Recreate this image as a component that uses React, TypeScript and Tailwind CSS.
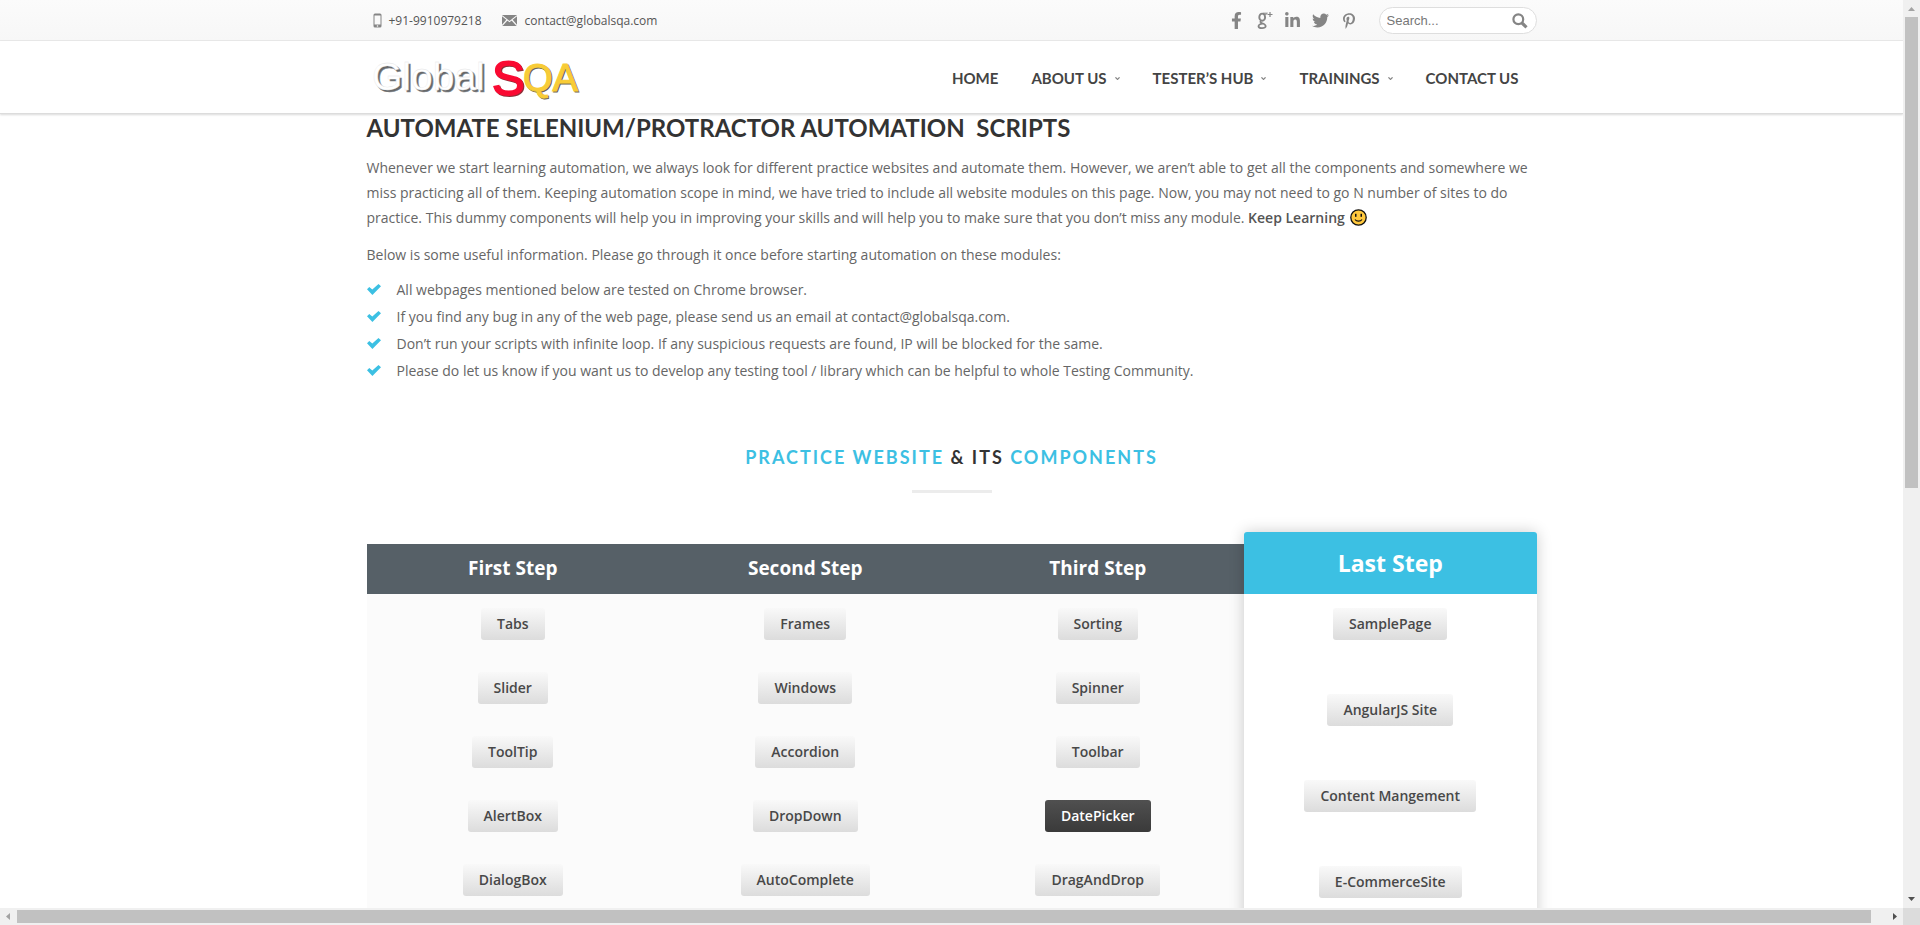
import React from 'react';
import { FaFacebookF, FaLinkedinIn, FaTwitter, FaPinterestP } from 'react-icons/fa';

const displayFont = "font-['Lato','Open_Sans',sans-serif]";

function GooglePlusIcon() {
  return (
    <svg viewBox="0 0 16 17" className="h-[17px] w-4" fill="none" stroke="currentColor">
      <ellipse cx="5.2" cy="5.2" rx="2.9" ry="3.6" strokeWidth="1.9" />
      <path d="M6 1.2h4.4L9.2 2.3H7" strokeWidth="1" />
      <path d="M4.2 8.6c-1.6 1.2-.6 2 .9 2.6 2 .8 3.9 1.500 3.600 3.200-.4 2.200-6.800 2.400-7.200.100-.2-1.500 1.500-2.600 4.200-2.800" strokeWidth="1.700" />
      <path d="M13 0v5M10.500 2.500h5" strokeWidth="1.200" />
    </svg>
  );
}

const socials = [
  { label: 'Facebook', icon: <FaFacebookF size={17} /> },
  { label: 'Google Plus', icon: <GooglePlusIcon /> },
  { label: 'LinkedIn', icon: <FaLinkedinIn size={17} /> },
  { label: 'Twitter', icon: <FaTwitter size={17} /> },
  { label: 'Pinterest', icon: <FaPinterestP size={16} /> },
];

const navItems = [
  { label: 'HOME', menu: false },
  { label: 'ABOUT US', menu: true },
  { label: 'TESTER’S HUB', menu: true },
  { label: 'TRAININGS', menu: true },
  { label: 'CONTACT US', menu: false },
];

const notes = [
  'All webpages mentioned below are tested on Chrome browser.',
  'If you find any bug in any of the web page, please send us an email at contact@globalsqa.com.',
  'Don’t run your scripts with infinite loop. If any suspicious requests are found, IP will be blocked for the same.',
  'Please do let us know if you want us to develop any testing tool / library which can be helpful to whole Testing Community.',
];

const steps = [
  { title: 'First Step', items: ['Tabs', 'Slider', 'ToolTip', 'AlertBox', 'DialogBox'] },
  { title: 'Second Step', items: ['Frames', 'Windows', 'Accordion', 'DropDown', 'AutoComplete'] },
  { title: 'Third Step', items: ['Sorting', 'Spinner', 'Toolbar', 'DatePicker', 'DragAndDrop'] },
];

const lastStep = ['SamplePage', 'AngularJS Site', 'Content Mangement', 'E-CommerceSite'];

function TopBar() {
  return (
    <div className="h-[41px] border-b border-[#e9e9e9] bg-linear-to-b from-[#fbfbfb] to-[#f7f7f7]">
      <div className="mx-auto flex h-10 max-w-[1170px] items-center justify-between pt-px">
        <div className="flex items-center pl-[6px] text-xs text-[#555]">
          <svg viewBox="0 0 9 15" className="mr-[7px] h-[15px] w-[9px]">
            <rect x="0.500" y="0.500" width="8" height="14" rx="1.500" fill="#858585" />
            <rect x="1.500" y="2.500" width="6" height="9" fill="#fafafa" />
            <circle cx="4.500" cy="13" r="0.800" fill="#fafafa" />
          </svg>
          <span>+91-9910979218</span>
          <svg viewBox="0 0 15 11" className="mr-2 ml-5 h-[11px] w-[15px]">
            <rect width="15" height="11" fill="#858585" />
            <path d="M0 .6L7.500 6.600 15 .6M0 10.600L5 5M15 10.600L10 5" fill="none" stroke="#fafafa" strokeWidth="1.200" />
          </svg>
          <a href="#contact">contact@globalsqa.com</a>
        </div>
        <div className="flex items-center">
          <div className="mr-4 flex items-center text-[#858585]">
            {socials.map((s) => (
              <a key={s.label} href="#social" aria-label={s.label} className="flex w-7 justify-center">
                {s.icon}
              </a>
            ))}
          </div>
          <form className="flex h-[27px] w-[158px] items-center rounded-full border border-[#dedede] bg-white pr-2 pl-[7px]">
            <input
              type="text"
              aria-label="Search"
              placeholder="Search..."
              className="min-w-0 flex-1 bg-transparent font-['Liberation_Sans',Arial,sans-serif] text-[13px] text-[#666] outline-none placeholder:text-[#777]"
            />
            <button type="button" aria-label="Submit search">
              <svg viewBox="0 0 16 16" className="size-4" fill="none" stroke="#858585">
                <circle cx="6.300" cy="6.300" r="4.900" strokeWidth="2.200" />
                <path d="M9.800 9.800L14.500 14.300" strokeWidth="3.200" />
              </svg>
            </button>
          </form>
        </div>
      </div>
    </div>
  );
}

function Logo() {
  return (
    <a href="#home" aria-label="GlobalSQA">
      <svg viewBox="0 0 220 50" className="h-[50px] w-[220px] overflow-visible font-['Liberation_Sans',Arial,sans-serif]">
        <g fontSize="38">
          <text x="157" y="38" fill="#6b6554" stroke="#6b6554">QA</text>
          <text x="156" y="37" fill="#f8cc36" stroke="#f8cc36">QA</text>
        </g>
        <g fontSize="39">
          <text x="7" y="38" fill="#66686a" stroke="#8a8c8e" strokeWidth="0.500">Global</text>
          <text x="5" y="36" fill="#ffffff" stroke="#e4e5e6" strokeWidth="0.300">Global</text>
        </g>
        <g fontSize="49">
          <text x="126" y="42" fill="#8d3038" stroke="#8d3038" strokeWidth="1.800">S</text>
          <text x="125" y="41" fill="#fa0a32" stroke="#fa0a32" strokeWidth="1.800">S</text>
        </g>
      </svg>
    </a>
  );
}

function Header() {
  return (
    <header className="relative z-10 border-b border-[#dcdcdc] bg-white shadow-[0_1px_2px_rgba(0,0,0,0.15)]">
      <div className="mx-auto flex h-[72px] max-w-[1170px] items-center justify-between pt-[3px]">
        <Logo />
        <nav className={`${displayFont} flex items-center gap-[33px] pr-[18px] text-[15px] font-bold text-[#444]`}>
          {navItems.map((n) => (
            <a key={n.label} href="#nav" className="flex items-center gap-2 whitespace-nowrap">
              {n.label}
              {n.menu && (
                <svg viewBox="0 0 5 3" className="h-[3px] w-[5px]">
                  <path d="M0 .5L2.500 3 5 .5H3.800L2.500 1.700 1.200 .5z" fill="#777" stroke="#777" strokeWidth="0.300" />
                </svg>
              )}
            </a>
          ))}
        </nav>
      </div>
    </header>
  );
}

function Smiley() {
  return (
    <svg viewBox="0 0 17 17" role="img" aria-label="smile" className="ml-[2px] inline-block size-[17px] align-[-3px]">
      <circle cx="8.500" cy="8.500" r="7.700" fill="#ffc83d" stroke="#111" strokeWidth="1.300" />
      <rect x="5" y="4.800" width="1.500" height="3" fill="#111" />
      <rect x="10.500" y="4.800" width="1.500" height="3" fill="#111" />
      <path d="M5 10.500c1.500 2.200 5.500 2.200 7 0" fill="none" stroke="#111" strokeWidth="1.200" />
    </svg>
  );
}

function StepLink({ label }: { label: string }) {
  const tone = label === 'DatePicker' ? 'from-[#505050] to-[#3a3a3a] text-white' : 'from-[#f9f9f9] to-[#dcdcdc] text-[#484848]';
  return (
    <a
      href="#demo"
      className={`${tone} flex h-8 items-center rounded-[3px] bg-linear-to-b px-4 text-sm font-semibold whitespace-nowrap`}
    >
      {label}
    </a>
  );
}

function Steps() {
  return (
    <section className="grid grid-cols-4 items-end">
      {steps.map((s) => (
        <div key={s.title} className="self-stretch pt-3">
          <div className="flex h-full flex-col bg-[#fbfbfb]">
            <h4 className="flex h-[50px] items-center justify-center bg-[#566067] text-[19px] font-bold text-white">{s.title}</h4>
            <ul className="flex flex-col items-center gap-8 py-[14px]">
              {s.items.map((i) => (
                <li key={i}>
                  <StepLink label={i} />
                </li>
              ))}
            </ul>
          </div>
        </div>
      ))}
      <div className="relative rounded-t-[3px] bg-white shadow-[0_0_15px_rgba(0,0,0,0.2)]">
        <h4 className="flex h-[62px] items-center justify-center rounded-t-[3px] bg-[#3cc0e3] text-[23px] font-bold text-white">Last Step</h4>
        <ul className="flex flex-col items-center gap-[54px] pt-[14px] pb-12">
          {lastStep.map((i) => (
            <li key={i}>
              <StepLink label={i} />
            </li>
          ))}
        </ul>
      </div>
    </section>
  );
}

function Arrow({ d, dim = false }: { d: string; dim?: boolean }) {
  return (
    <svg viewBox="0 0 17 17" className="size-[17px] shrink-0">
      <path d={d} fill={dim ? '#a3a3a3' : '#505050'} />
    </svg>
  );
}

export default function App() {
  return (
    <div className="flex h-screen flex-col overflow-hidden bg-white font-['Open_Sans',sans-serif]">
      <div className="flex min-h-0 flex-1">
        <div className="min-w-0 flex-1 overflow-hidden">
          <TopBar />
          <Header />
          <main className="mx-auto max-w-[1170px] text-sm text-[#666]">
            <h1 className={`${displayFont} text-2xl leading-7 font-bold whitespace-pre text-[#333]`}>
              {'AUTOMATE SELENIUM/PROTRACTOR AUTOMATION  SCRIPTS'}
            </h1>
            <p className="mt-[13px] leading-[25px]">
              Whenever we start learning automation, we always look for different practice websites and automate them. However, we
              aren’t able to get all the components and somewhere we miss practicing all of them. Keeping automation scope in mind,
              we have tried to include all website modules on this page. Now, you may not need to go N number of sites to do
              practice. This dummy components will help you in improving your skills and will help you to make sure that you don’t
              miss any module. <strong className="font-semibold text-[#555]">Keep Learning</strong> <Smiley />
            </p>
            <p className="mt-3 leading-[25px]">
              Below is some useful information. Please go through it once before starting automation on these modules:
            </p>
            <ul className="mt-[9px] leading-[27px]">
              {notes.map((n) => (
                <li key={n} className="flex items-center">
                  <svg viewBox="0 0 14 11" className="mr-4 h-[11px] w-[14px] shrink-0" fill="#3cc0e3">
                    <path d="M0 5.200L2.300 3 5.300 5.600 11.500 0 14 2.300 5.400 11z" />
                  </svg>
                  {n}
                </li>
              ))}
            </ul>
            <div className="pt-[61px] pb-[39px] text-center">
              <h2 className={`${displayFont} text-lg leading-6 font-bold tracking-[2px] text-[#333]`}>
                <span className="text-[#3cc0e3]">PRACTICE WEBSITE</span> &amp; ITS <span className="text-[#3cc0e3]">COMPONENTS</span>
              </h2>
              <div className="mx-auto mt-[21px] h-[3px] w-20 bg-[#ececec]" />
            </div>
            <Steps />
          </main>
        </div>
        <div className="flex w-[17px] flex-col items-center justify-between bg-[#f0f0f0]">
          <Arrow d="M5 11L8.500 7 12 11z" dim />
          <div className="w-[13px] flex-[471] bg-[#c1c1c1]" />
          <div className="flex-[403]" />
          <Arrow d="M5 6L8.500 10 12 6z" />
        </div>
      </div>
      <div className="flex h-[17px] items-center bg-[#f0f0f0]">
        <Arrow d="M10 5L6 8.500 10 12z" dim />
        <div className="h-[13px] flex-[1854] bg-[#c1c1c1]" />
        <div className="flex-[15]" />
        <Arrow d="M7 5L11 8.500 7 12z" />
        <div className="size-[17px] bg-[#dcdcdc]" />
      </div>
    </div>
  );
}
